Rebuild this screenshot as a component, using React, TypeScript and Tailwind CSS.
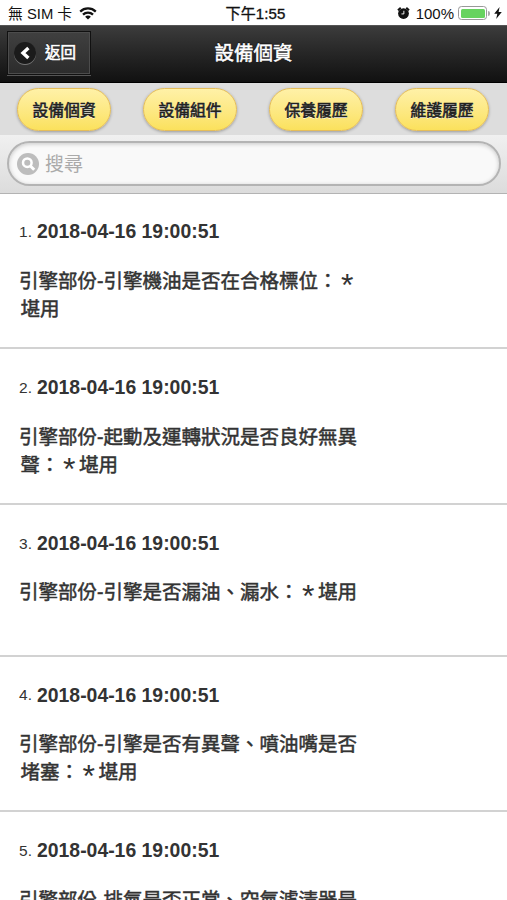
interface CheckItem {
  time: string;
  lines: string[];
}

const tabs = ['設備個資', '設備組件', '保養履歷', '維護履歷'];

const items: CheckItem[] = [
  { time: '2018-04-16 19:00:51', lines: ['引擎部份-引擎機油是否在合格標位：*', '堪用'] },
  { time: '2018-04-16 19:00:51', lines: ['引擎部份-起動及運轉狀況是否良好無異', '聲：*堪用'] },
  { time: '2018-04-16 19:00:51', lines: ['引擎部份-引擎是否漏油、漏水：*堪用'] },
  { time: '2018-04-16 19:00:51', lines: ['引擎部份-引擎是否有異聲、噴油嘴是否', '堵塞：*堪用'] },
  { time: '2018-04-16 19:00:51', lines: ['引擎部份-排氣是否正常、空氣濾清器是'] },
];

function WifiIcon() {
  return (
    <svg viewBox="0 0 18 13" className="h-[13px] w-[18px]" fill="none" stroke="#111" strokeWidth="2.3">
      <path d="M1.2 4.6C5.6.4 12.4.4 16.8 4.6" />
      <path d="M4 7.7C6.8 5 11.2 5 14 7.7" />
      <path d="M9 12.6 6.1 9.7c1.6-1.5 4.2-1.5 5.8 0z" fill="#111" stroke="none" />
    </svg>
  );
}

function AlarmIcon() {
  return (
    <svg viewBox="0 0 14 14" className="h-[14px] w-[13px]" fill="none" stroke="#111" strokeWidth="2">
      <circle cx="7" cy="7.6" r="5.8" fill="#111" stroke="none" />
      <path d="M1 4 4 1.4M13 4 10 1.4" />
      <path d="M7.4 4.6v3.4H4.8" stroke="#fff" strokeWidth="1" />
    </svg>
  );
}

function StatusBar() {
  return (
    <div className="grid h-[25px] grid-cols-3 items-center bg-white pt-[3px] text-[15px] leading-5 text-[#111]">
      <div className="flex items-center pl-2">
        <span className="w-[65px] whitespace-nowrap text-[14.8px]">無 SIM 卡</span>
        <span className="ml-[6px] -mt-[2px]"><WifiIcon /></span>
      </div>
      <span className="pl-[4px] text-center text-[15px] tracking-[0.1px] [-webkit-text-stroke:0.35px_#111]">下午1:55</span>
      <div className="-mt-[2px] flex items-center justify-end pr-[5px]">
        <AlarmIcon />
        <span className="ml-[6px] pt-px text-[15px]">100%</span>
        <div className="ml-[4px] h-[14px] w-[29px] rounded-[3.5px] border border-[#999] p-[1.5px]">
          <div className="h-full rounded-[1.5px] bg-[#67d35f]" />
        </div>
        <span className="ml-px h-[5px] w-[2px] rounded-r bg-[#aaa]" />
        <svg viewBox="0 0 8 12" className="ml-[4px] h-[12px] w-[8px]" fill="#111">
          <path d="M5.6 0 .2 6.7h3.1L2.2 12 7.8 5H4.6z" />
        </svg>
      </div>
    </div>
  );
}

function Header() {
  return (
    <header className="grid h-[58px] grid-cols-[1fr_auto_1fr] items-center border-y border-t-[#555] border-b-black bg-linear-to-b from-[#3c3c3c] to-[#111] text-white">
      <button className="mb-[3px] ml-[7px] flex h-[44px] w-[84px] items-center border border-[#111] bg-linear-to-b from-[#404040] to-[#2c2c2c] pl-[6px] shadow-[inset_0_0_0_1px_#4c4c4c,0_1px_0_#555]">
        <span className="flex size-[22px] items-center justify-center rounded-full bg-[#1b1b1b] shadow-[0_1px_0_#777]">
          <svg viewBox="0 0 12 14" className="h-[14px] w-[12px]" fill="none" stroke="#fff" strokeWidth="3.4">
            <path d="M9.4 2 4 7l5.4 5" />
          </svg>
        </span>
        <span className="ml-[9px] text-[15.5px] [-webkit-text-stroke:0.6px_#fff] [text-shadow:0_-1px_1px_#000]">返回</span>
      </button>
      <h1 className="pb-[2px] text-[19.5px] leading-7 [-webkit-text-stroke:0.5px_#fff] [text-shadow:0_-1px_1px_#000]">設備個資</h1>
    </header>
  );
}

function SearchBar() {
  return (
    <div className="h-[58.5px] border-b border-[#b3b3b3] bg-linear-to-b from-[#f0f0f0] to-[#dcdcdc] pl-[7px] pr-[6px] pt-[6px]">
      <div className="flex h-[45px] items-center rounded-full border-2 border-[#b4b4b4] bg-[#f9f9f9] pl-[8px] shadow-[inset_0_1px_4px_rgba(0,0,0,0.2)]">
        <svg viewBox="0 0 22 22" className="size-[22px]" fill="none">
          <circle cx="11" cy="11" r="11" fill="#bdbdbd" />
          <circle cx="10.3" cy="9.7" r="4.3" stroke="#fff" strokeWidth="2.5" />
          <path d="m13.2 12.8 4 4" stroke="#fff" strokeWidth="3" />
        </svg>
        <span className="ml-[6px] pt-[2px] text-[19px] leading-6 text-[#aaa]">搜尋</span>
      </div>
    </div>
  );
}

function CheckLine({ text }: { text: string }) {
  const [before, after] = text.split('*');
  return (
    <p className="h-7 pl-[1.5px] first:pl-0">
      {before}
      {after !== undefined && (
        <span className="relative top-[8px] inline-block w-[19.5px] text-center text-[32px] leading-[0] [-webkit-text-stroke:0]">*</span>
      )}
      {after}
    </p>
  );
}

export default function App() {
  return (
    <div className="h-[900px] w-[507px] overflow-hidden bg-white font-['Liberation_Sans','Noto_Sans_CJK_TC',sans-serif] text-[#333]">
      <StatusBar />
      <Header />
      <nav className="flex h-[52px] justify-between bg-[#ddd] pl-[17px] pr-[18px] pt-[5px]">
        {tabs.map((tab) => (
          <button
            key={tab}
            className="h-[43px] w-[94px] rounded-full border border-[#e5bd59] bg-linear-to-b from-[#fff1a7] to-[#fbe15c] pt-[2px] text-[15.8px] text-[#222] shadow-[0_1px_3px_rgba(0,0,0,0.3)] [-webkit-text-stroke:0.6px_#222] [text-shadow:0_1px_0_#fff]"
          >
            {tab}
          </button>
        ))}
      </nav>
      <SearchBar />
      <ol>
        {items.map((item, i) => (
          <li
            key={i}
            className={`border-b-2 border-[#d2d2d2] pl-[19px] pt-[24.5px] ${item.lines.length > 1 ? 'h-[155.7px]' : 'h-[151.7px]'}`}
          >
            <div className="flex h-7 items-center whitespace-nowrap">
              <span className="w-[18px] text-[15.5px]">{i + 1}.</span>
              <span className="text-[19.4px] font-bold">{item.time}</span>
            </div>
            <div className="mt-[21px] whitespace-nowrap text-[19.5px] leading-[28px] [-webkit-text-stroke:0.5px_#333]">
              {item.lines.map((line) => (
                <CheckLine key={line} text={line} />
              ))}
            </div>
          </li>
        ))}
      </ol>
    </div>
  );
}
